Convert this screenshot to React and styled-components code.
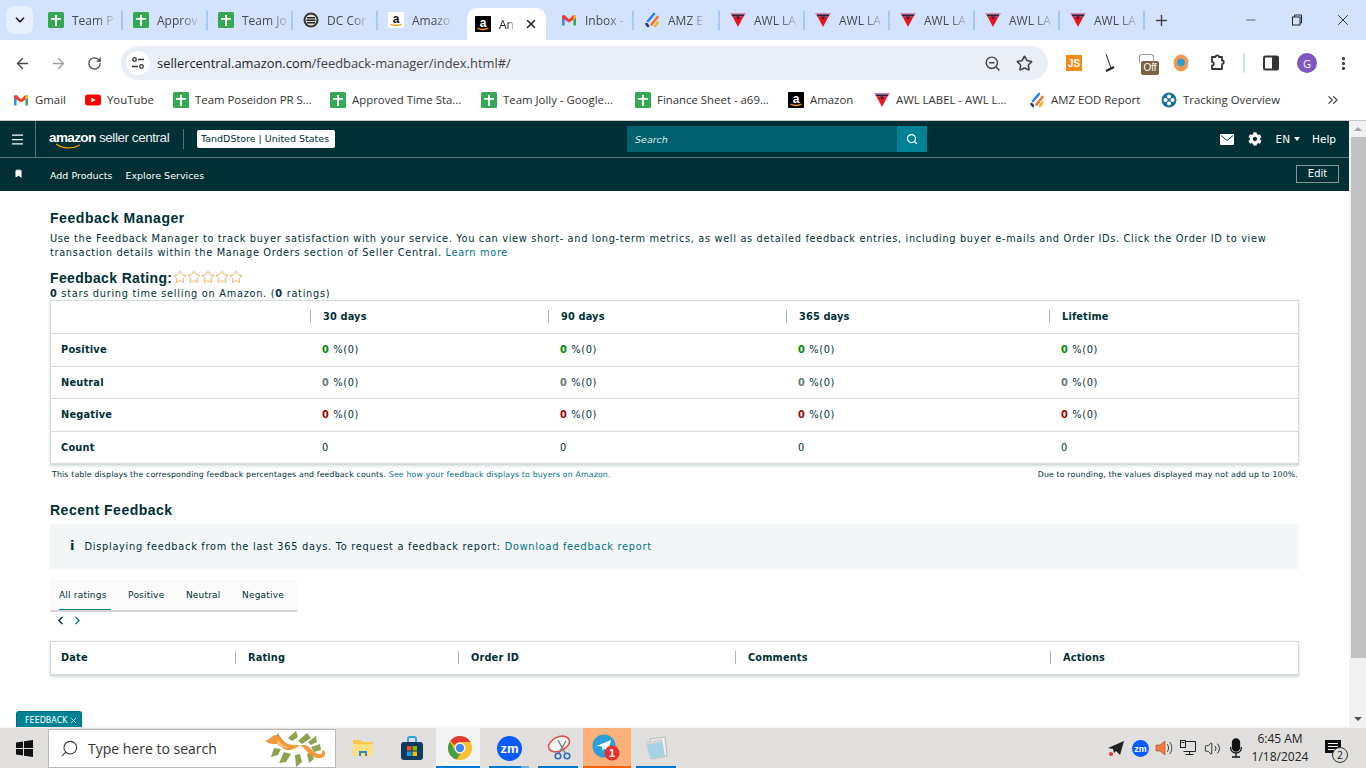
import React from 'react'
import styled, { createGlobalStyle } from 'styled-components'
import {
  ArrowLeft,
  ArrowRight,
  RotateCw,
  ZoomOut,
  Star,
  EllipsisVertical,
  ChevronDown,
  ChevronLeft,
  ChevronRight,
  ChevronsRight,
  Plus,
  Minus,
  X,
  Search,
  Menu,
  Bookmark,
  Volume2,
} from 'lucide-react'
import { FaCog } from 'react-icons/fa'

const colors = {
  ink: '#002f36',
  teal: '#008296',
  link: '#007185',
  line: '#d5dbdb',
  chrome: '#d3e3fd',
  omni: '#e9eef7',
}

const GlobalStyle = createGlobalStyle`
  html, body { margin: 0; padding: 0; height: 100%; overflow: hidden; background: #fff; }
  body { font-family: "DejaVu Sans", sans-serif; }
  * { box-sizing: border-box; }
`

/* ---------------------------- favicons ---------------------------- */

const SheetIcon = () => (
  <svg width="16" height="16" viewBox="0 0 16 16">
    <rect width="16" height="16" rx="1.5" fill="#34a853" />
    <path d="M7 3h2v3h4v1.800H9V14H7V7.800H3V6h4z" fill="#fff" />
  </svg>
)

const AmazonIcon = ({ dark }) => (
  <svg width="16" height="16" viewBox="0 0 16 16">
    <rect width="16" height="16" rx="1" fill={dark ? '#000' : '#fff'} />
    <text x="8" y="10.5" textAnchor="middle" fontSize="12" fontWeight="700" fontFamily="Liberation Sans" fill={dark ? '#fff' : '#111'}>a</text>
    <path d="M2.5 12c3 2 8 2 11 0" stroke="#f90" strokeWidth="1.3" fill="none" />
  </svg>
)

const DcIcon = () => (
  <svg width="16" height="16" viewBox="0 0 16 16">
    <circle cx="8" cy="8" r="7.5" fill="#333" />
    <circle cx="8" cy="8" r="5.5" fill="#ddd" />
    <path d="M4 5h8v1.5H4zM3.5 7.5h9V9h-9zM4 10h8v1.5H4z" fill="#222" />
  </svg>
)

const GmailIcon = () => (
  <svg width="16" height="16" viewBox="0 0 16 16">
    <path d="M1 3.5v10h2.6V7z" fill="#4285f4" />
    <path d="M15 3.5v10h-2.6V7z" fill="#34a853" />
    <path d="M1 3.5 L3.6 3 L8 7.2 L12.4 3 L15 3.5 V6 L8 10.6 L1 6z" fill="#ea4335" />
    <path d="M12.4 3 L15 3.5 V6 L12.4 7.8z" fill="#fbbc04" />
  </svg>
)

const YoutubeIcon = () => (
  <svg width="16" height="16" viewBox="0 0 16 16">
    <rect y="2.5" width="16" height="11" rx="3" fill="#f00" />
    <path d="M6.4 5.6v4.8L10.6 8z" fill="#fff" />
  </svg>
)

const EodIcon = () => (
  <svg width="16" height="16" viewBox="0 0 16 16" strokeWidth="2.6" strokeLinecap="round">
    <path d="M10 2 L4 9" stroke="#2f80ed" />
    <path d="M13.5 5 L7.5 12.5" stroke="#f2762e" />
    <path d="M13.5 10.5 L11 14" stroke="#f6b21b" />
    <path d="M2.5 12 L4 14" stroke="#1c3d7a" />
  </svg>
)

const AwlIcon = () => (
  <svg width="16" height="16" viewBox="0 0 16 16">
    <path d="M0 1h16l-1.500 3H1.500z" fill="#d88aa8" />
    <path d="M2 2.500h12V4.500H2z" fill="#26223f" />
    <path d="M2.500 4.500h11L8 15z" fill="#f0141e" />
    <path d="M6 4.500h4L8 8z" fill="#26223f" />
  </svg>
)

const TrackingIcon = () => (
  <svg width="16" height="16" viewBox="0 0 16 16">
    <circle cx="8" cy="8" r="7.500" fill="#1f6f9c" />
    <circle cx="8" cy="4.500" r="2" fill="#fff" />
    <circle cx="8" cy="11.500" r="2" fill="#fff" />
    <circle cx="4.500" cy="8" r="2" fill="#fff" />
    <circle cx="11.500" cy="8" r="2" fill="#fff" />
  </svg>
)

/* ---------------------------- tab strip --------------------------- */

const Strip = styled.div`
  height: 40px;
  background: ${colors.chrome};
  display: flex;
  align-items: center;
  padding-left: 6px;
  flex: none;
`

const TabMenu = styled.div`
  width: 27px;
  height: 28px;
  border-radius: 8px;
  background: #e8effc;
  display: flex;
  align-items: center;
  justify-content: center;
  margin-right: 5px;
  color: #1f1f1f;
`

const Tab = styled.div`
  height: 40px;
  width: ${({ $w }) => $w}px;
  display: flex;
  align-items: center;
  gap: 8px;
  padding-left: 10px;
  position: relative;
  color: #45494e;
  font: 12px "Open Sans", sans-serif;
  &::after {
    content: '';
    display: ${({ $noSep }) => ($noSep ? 'none' : 'block')};
    position: absolute;
    right: 0;
    top: 11px;
    height: 19px;
    width: 2px;
    background: #a8c7fa;
  }
`

const ActiveTab = styled(Tab)`
  width: 79px;
  margin: 8px 0 0 4px;
  height: 32px;
  padding-left: 8px;
  background: #fff;
  border-radius: 10px 10px 0 0;
  color: #1f1f1f;
  &::after { display: none; }
  & + div { margin-left: 4px; padding-left: 11px; }
`

const TabTitle = styled.span`
  white-space: nowrap;
  -webkit-mask-image: linear-gradient(90deg, #000 60%, rgba(0, 0, 0, 0.2));
  mask-image: linear-gradient(90deg, #000 60%, rgba(0, 0, 0, 0.2));
`

const TabClose = styled.span`
  display: flex;
  margin-left: 2px;
`

const NewTab = styled.div`
  margin-left: 8px;
  color: #444;
  display: flex;
`

const WindowButtons = styled.div`
  margin-left: auto;
  display: flex;
  color: #222;
`

const WindowButton = styled.div`
  width: 46px;
  height: 32px;
  display: flex;
  align-items: center;
  justify-content: center;
`

const RestoreIcon = () => (
  <svg width="12" height="12" viewBox="0 0 12 12" fill="none" stroke="#222">
    <rect x="1.500" y="3" width="7.500" height="8" />
    <path d="M3.500 3V1h7v8H9" />
  </svg>
)

/* ---------------------------- toolbar ----------------------------- */

const Toolbar = styled.div`
  height: 40px;
  padding-top: 6px;
  background: #fff;
  border-radius: 10px 10px 0 0;
  display: flex;
  align-items: center;
  flex: none;
`

const NavIcon = styled.div`
  width: 36px;
  display: flex;
  justify-content: center;
  color: ${({ $off }) => ($off ? '#9aa0a6' : '#474747')};
`

const BackIcon = styled(NavIcon)`
  margin-left: 4px;
`

const Omnibox = styled.div`
  width: 927px;
  height: 34px;
  margin-left: 9px;
  border-radius: 17px;
  background: ${colors.omni};
  display: flex;
  align-items: center;
  padding: 0 15px 0 5px;
  font: 12.900px "Open Sans", sans-serif;
  color: #1f1f1f;
`

const SiteChip = styled.div`
  width: 24px;
  height: 24px;
  border-radius: 50%;
  background: #fff;
  display: flex;
  align-items: center;
  justify-content: center;
  margin-right: 7px;
`

const Url = styled.span`
  flex: 1;
  span { color: #444; }
`

const OmniIcons = styled.div`
  display: flex;
  gap: 15px;
  color: #444;
`

const Extensions = styled.div`
  display: flex;
  align-items: center;
  flex: 1;
  padding-left: 17px;
`

const ExtSlot = styled.div`
  width: ${({ $w }) => $w}px;
  display: flex;
  justify-content: center;
  position: relative;
  color: #333;
`

const JsBadge = styled.div`
  width: 16px;
  height: 16px;
  background: #f48b17;
  color: #fff;
  font: 700 10px "Liberation Sans", sans-serif;
  display: flex;
  align-items: center;
  justify-content: center;
`

const OffBadge = styled.div`
  width: 18px;
  height: 14px;
  margin-top: 10px;
  background: #7a6245;
  border-radius: 2px;
  color: #fff;
  font: 10px "Liberation Sans", sans-serif;
  text-align: center;
  line-height: 14px;
  position: relative;
  &::before {
    content: '';
    position: absolute;
    left: -2px;
    top: -7px;
    width: 13px;
    height: 8px;
    border: 1px solid #9a9a9a;
    border-bottom: 0;
    border-radius: 3px 3px 0 0;
  }
`

const ToolbarRule = styled.div`
  width: 2px;
  height: 20px;
  background: #d3e3fd;
  margin: 0 17px 0 8px;
`

const Avatar = styled.div`
  width: 20px;
  height: 20px;
  border-radius: 50%;
  background: #7e57c2;
  color: #fff;
  font: 11px "Open Sans", sans-serif;
  display: flex;
  align-items: center;
  justify-content: center;
`

/* --------------------------- bookmarks ---------------------------- */

const BookmarkBar = styled.div`
  height: 41px;
  padding: 0 0 1px 13px;
  background: #fff;
  border-bottom: 1px solid #c8c8c8;
  display: flex;
  align-items: center;
  flex: none;
  position: relative;
`

const BookmarkItem = styled.div`
  width: ${({ $w }) => $w}px;
  display: flex;
  align-items: center;
  gap: 6px;
  font: 11.400px "Open Sans", sans-serif;
  color: #333;
  white-space: nowrap;
  flex: none;
`

const BookmarkMore = styled.div`
  position: absolute;
  right: 25px;
  top: 12px;
  color: #555;
`

/* ------------------------- seller central ------------------------- */

const PageRow = styled.div`
  flex: 1;
  min-height: 0;
  display: flex;
  position: relative;
`

const Page = styled.div`
  flex: 1;
  min-width: 0;
  color: ${colors.ink};
  font-size: 10px;
`

const TopNav = styled.div`
  height: 37px;
  background: ${colors.ink};
  border-bottom: 1px solid #5b7378;
  display: flex;
  align-items: center;
  position: relative;
  color: #fff;
`

const Burger = styled.div`
  width: 36px;
  height: 36px;
  border-right: 1px solid #5b7378;
  display: flex;
  align-items: center;
  justify-content: center;
`

const Logo = styled.div`
  margin-left: 13px;
  width: 134px;
  font: 13.500px "Liberation Sans", sans-serif;
  letter-spacing: -0.45px;
  white-space: nowrap;
  position: relative;
  margin-top: -4px;
  color: #e8eded;
  b { font-weight: 700; color: #fff; letter-spacing: -0.6px; }
  svg { position: absolute; left: 6px; top: 13px; }
`

const LogoRule = styled.div`
  width: 1px;
  height: 20px;
  background: #5b7378;
  margin-right: 13px;
`

const StoreChip = styled.div`
  background: #fff;
  color: ${colors.ink};
  border-radius: 2px;
  height: 18px;
  width: 138px;
  padding-left: 4px;
  font: 9.500px/18px "DejaVu Sans", sans-serif;
`

const SearchBar = styled.div`
  position: absolute;
  left: 627px;
  top: 5px;
  width: 300px;
  height: 26px;
  background: #00606e;
  display: flex;
  align-items: center;
  justify-content: space-between;
  padding-left: 8px;
  font: italic 9.500px "DejaVu Sans", sans-serif;
  color: #dfe8ea;
`

const SearchButton = styled.div`
  width: 30px;
  height: 26px;
  background: ${colors.teal};
  display: flex;
  align-items: center;
  justify-content: center;
  color: #fff;
`

const NavRight = styled.div`
  margin-left: auto;
  display: flex;
  align-items: center;
  padding-right: 13px;
  font: 10.500px "DejaVu Sans", sans-serif;
`

const MailIcon = styled.svg`
  margin-right: 14px;
`

const GearSlot = styled.span`
  display: flex;
  margin-right: 14px;
`

const Caret = styled.span`
  display: inline-block;
  border: 3px solid transparent;
  border-top: 4px solid #fff;
  border-bottom: 0;
  margin-left: 4px;
  vertical-align: middle;
`

const HelpLink = styled.span`
  margin-left: 12px;
`

const SubNav = styled.div`
  height: 33px;
  background: ${colors.ink};
  display: flex;
  align-items: center;
  color: #fff;
  padding-right: 10px;
`

const SubNavPin = styled.div`
  width: 50px;
  padding-left: 14px;
  display: flex;
  margin-top: -3px;
`

const SubNavLink = styled.span`
  font-size: 9.500px;
  margin: 1px 13px 0 0;
`

const EditButton = styled.div`
  margin-left: auto;
  width: 43px;
  height: 18px;
  border: 1px solid #879596;
  text-align: center;
  font: 10px/16px "DejaVu Sans", sans-serif;
  margin-top: -2px;
`

const Content = styled.div`
  padding: 19px 50px 0;
`

const Heading = styled.h1`
  margin: 0;
  font: 700 14px/16px "Liberation Sans", sans-serif;
  letter-spacing: 0.55px;
`

const Intro = styled.p`
  margin: 6px 0 0;
  font-size: 9.800px;
  letter-spacing: 0.66px;
  line-height: 14px;
`

const Link = styled.span`
  color: ${colors.link};
`

const RatingTitle = styled(Heading)`
  margin-top: 10px;
  letter-spacing: 0.35px;
  display: flex;
  align-items: center;
  gap: 1px;
`

const Stars = styled.span`
  display: flex;
  margin-top: -3px;
  color: #dfa94e;
`

const Summary = styled.p`
  margin: 1px 0 0;
  font-size: 9.800px;
  letter-spacing: 0.71px;
  line-height: 14px;
  b { font-weight: 700; }
`

const Table = styled.div`
  margin-top: ${({ $top }) => $top}px;
  border: 1px solid ${colors.line};
  border-bottom-width: 2px;
  box-shadow: 0 1px 3px rgba(0, 47, 54, 0.18);
  background: #fff;
`

const Row = styled.div`
  display: grid;
  grid-template-columns: ${({ $cols }) => $cols};
  height: ${({ $h }) => $h}px;
  align-items: center;
  border-top: ${({ $first }) => ($first ? '0' : `1px solid ${colors.line}`)};
`

const HeadCell = styled.div`
  font-weight: 700;
  font-size: 9.800px;
  letter-spacing: 0.15px;
  line-height: 13px;
  margin-top: -2px;
  padding-left: ${({ $rule }) => ($rule ? '12px' : '10px')};
  border-left: ${({ $rule }) => ($rule ? '1px solid #a9b4b6' : '0')};
  min-height: 13px;
`

const BodyCell = styled.div`
  font-size: 9.800px;
  letter-spacing: ${({ $label }) => ($label ? '0.2px' : '0.65px')};
  padding-left: ${({ $label }) => ($label ? '10px' : '12px')};
  font-weight: ${({ $label }) => ($label ? 700 : 400)};
`

const Pct = styled.b`
  color: ${({ $c }) => $c};
`

const TableNotes = styled.div`
  display: flex;
  justify-content: space-between;
  padding: 0 1px 0 2px;
  margin-top: 4px;
  font-size: 7.800px;
  letter-spacing: 0.16px;
  line-height: 11px;
`

const SectionTitle = styled(Heading)`
  margin-top: 22px;
  letter-spacing: 0.5px;
`

const InfoBox = styled.div`
  margin-top: 6px;
  height: 45px;
  background: #f3f6f6;
  display: flex;
  align-items: center;
  padding-left: 20px;
  font-size: 9.800px;
  letter-spacing: 0.72px;
  gap: 10px;
`

const InfoMark = styled.b`
  font-size: 13px;
  line-height: 13px;
  letter-spacing: 0;
  font-weight: 700;
  margin-top: -2px;
`

const RatingTabs = styled.div`
  margin-top: 10px;
  width: 247px;
  height: 33px;
  background: #fafafa;
  border-bottom: 2px solid #d5d5d5;
  display: flex;
  padding-left: 9px;
  gap: 21.500px;
  font-size: 9px;
  letter-spacing: 0.2px;
`

const RatingTab = styled.div`
  height: 31px;
  padding: 11px ${({ $active }) => ($active ? '4px' : '0')} 0 0;
  margin-right: ${({ $active }) => ($active ? '-4px' : '0')};
  border-bottom: ${({ $active }) => ($active ? `1px solid ${colors.teal}` : '0')};
`

const Pager = styled.div`
  display: flex;
  gap: 4px;
  height: 15px;
  margin: 1px 0 0 4px;
  align-items: center;
`

const FeedbackTab = styled.div`
  position: absolute;
  left: 16px;
  bottom: 0;
  width: 66px;
  height: 16px;
  background: ${colors.teal};
  border: 1px solid #006d7e;
  border-bottom: 0;
  border-radius: 3px 3px 0 0;
  color: #fff;
  font: 8px/14px "DejaVu Sans", sans-serif;
  padding: 2px 0 0 8px;
  display: flex;
  align-items: center;
  gap: 1px;
`

const Scrollbar = styled.div`
  width: 17px;
  flex: none;
  background: #f1f1f1;
  display: flex;
  flex-direction: column;
  align-items: center;
`

const ScrollArrow = styled.div`
  height: 16px;
  display: flex;
  align-items: center;
  justify-content: center;
  flex: none;
  &::before {
    content: '';
    border-left: 4px solid transparent;
    border-right: 4px solid transparent;
    ${({ $down }) => ($down ? 'border-top: 4px solid #505050;' : 'border-bottom: 4px solid #a3a3a3;')}
  }
`

const ScrollThumb = styled.div`
  width: 15px;
  margin-left: 2px;
  height: 521px;
  background: #c1c1c1;
  flex: none;
`

const ScrollGap = styled.div`
  flex: 1;
`

/* ---------------------------- taskbar ----------------------------- */

const Taskbar = styled.div`
  height: 41px;
  flex: none;
  background: #e0dfdd;
  border-top: 1px solid #f2f2f2;
  display: flex;
  align-items: stretch;
  font-family: "Open Sans", sans-serif;
  color: #222;
`

const StartButton = styled.div`
  width: 48px;
  display: flex;
  align-items: center;
  justify-content: center;
`

const SearchBox = styled.div`
  width: 288px;
  margin: 1px 0 0;
  background: #fff;
  border: 1px solid #b9b9b9;
  display: flex;
  align-items: center;
  padding-left: 11px;
  gap: 9px;
  font-size: 14px;
  overflow: hidden;
  color: #333;
  svg:first-child { transform: scaleX(-1); }
  svg:last-child { margin-left: auto; margin-right: 5px; }
`

const TaskIcons = styled.div`
  display: flex;
  margin-left: 3px;
`

const TaskIcon = styled.div`
  width: ${({ $w }) => $w || 49}px;
  display: flex;
  align-items: center;
  justify-content: center;
  background: ${({ $bg }) => $bg || 'transparent'};
  padding-left: ${({ $pad }) => $pad || 0}px;
  position: relative;
  margin-right: ${({ $gap }) => $gap || 0}px;
  &::after {
    content: '';
    display: ${({ $mark }) => ($mark ? 'block' : 'none')};
    position: absolute;
    left: 0;
    right: 0;
    bottom: 0;
    height: 2px;
    background: ${({ $mark }) => $mark};
  }
`

const Tray = styled.div`
  margin-left: auto;
  display: flex;
  align-items: center;
  padding-right: 21px;
`

const TrayIcon = styled.div`
  width: 24px;
  display: flex;
  justify-content: center;
  color: #222;
`

const Clock = styled.div`
  width: 64px;
  margin-right: 9px;
  text-align: center;
  font-size: 12px;
  line-height: 18px;
  color: #222;
`

const Notify = styled.div`
  position: relative;
  width: 24px;
  display: flex;
  justify-content: center;
`

const NotifyCount = styled.div`
  position: absolute;
  right: -3px;
  bottom: -6px;
  width: 16px;
  height: 16px;
  border-radius: 50%;
  border: 1px solid #333;
  background: #dededc;
  font-size: 10.500px;
  line-height: 14px;
  text-align: center;
`

const Shell = styled.div`
  width: 1366px;
  height: 768px;
  display: flex;
  flex-direction: column;
  overflow: hidden;
`

const PuzzleIcon = () => (
  <svg width="18" height="18" viewBox="0 0 18 18" fill="none" stroke="#333" strokeWidth="1.800" strokeLinejoin="round">
    <path d="M4 3h3.500a1.700 1.700 0 0 1 3.400 0H14v3.500a1.800 1.800 0 0 1 0 3.600V15H4v-3.500a1.800 1.800 0 0 0 0-3.600z" />
  </svg>
)

const WindowsLogo = () => (
  <svg width="17" height="17" viewBox="0 0 17 17" fill="#111">
    <path d="M0 2.400 7 1.400V8H0zM8 1.200 17 0v8H8zM0 9h7v6.600L0 14.600zM8 9h9v8l-9-1.200z" />
  </svg>
)

const FolderIcon = () => (
  <svg width="22" height="20" viewBox="0 0 22 20">
    <path d="M1 2h8l2 2h10v14H1z" fill="#f5c94c" />
    <path d="M1 6h20v12H1z" fill="#fde181" />
    <path d="M7 13h8v5h-2v-3H9v3H7z" fill="#2d8ad6" />
  </svg>
)

const StoreIcon = () => (
  <svg width="22" height="24" viewBox="0 0 22 24">
    <path d="M7 6V3a2 2 0 0 1 2-2h4a2 2 0 0 1 2 2v3" fill="none" stroke="#29a6e0" strokeWidth="2" />
    <rect y="6" width="22" height="18" rx="3" fill="#12395f" />
    <rect x="6" y="10" width="4.500" height="4.500" fill="#f25022" />
    <rect x="11.500" y="10" width="4.500" height="4.500" fill="#7fba00" />
    <rect x="6" y="15.500" width="4.500" height="4.500" fill="#00a4ef" />
    <rect x="11.500" y="15.500" width="4.500" height="4.500" fill="#ffb900" />
  </svg>
)

const ChromeIcon = () => (
  <svg width="24" height="24" viewBox="0 0 24 24">
    <circle cx="12" cy="12" r="12" fill="#fbc02d" />
    <path d="M12 0a12 12 0 0 1 10.400 6H12a6 6 0 0 0-5.500 3.600L2.300 4.900A12 12 0 0 1 12 0z" fill="#e53935" />
    <path d="M1.900 5.500 7 14.500a6 6 0 0 0 5.500 3.500L8.500 23.500A12 12 0 0 1 1.900 5.500z" fill="#43a047" />
    <circle cx="12" cy="12" r="5.400" fill="#fff" />
    <circle cx="12" cy="12" r="4.200" fill="#4285f4" />
  </svg>
)

const ZoomBadge = ({ size }) => (
  <svg width={size} height={size} viewBox="0 0 24 24">
    <circle cx="12" cy="12" r="12" fill="#0b5cff" />
    <text x="12" y="16.500" textAnchor="middle" fontSize="12.500" fontWeight="700" fontFamily="Liberation Sans" fill="#fff">zm</text>
  </svg>
)

const SnipIcon = () => (
  <svg width="26" height="26" viewBox="0 0 26 26" fill="none">
    <ellipse cx="12" cy="9" rx="11" ry="7" transform="rotate(-25 12 9)" fill="#f4f4f4" stroke="#d9534f" strokeWidth="1.500" />
    <path d="M11 5l7 13M19 6l-7 12" stroke="#777" strokeWidth="1.300" />
    <circle cx="20" cy="21" r="2.800" stroke="#2e6fc4" strokeWidth="1.600" />
    <circle cx="11" cy="21" r="2.800" stroke="#2e6fc4" strokeWidth="1.600" />
  </svg>
)

const TelegramIcon = () => (
  <svg width="30" height="28" viewBox="0 0 30 28">
    <circle cx="12" cy="12" r="11.500" fill="#2b9fd8" />
    <path d="M4.500 12 19 6l-3 12-3.500-3.500-2 2-.5-4z" fill="#fff" />
    <circle cx="20" cy="19" r="7.500" fill="#e8312a" />
    <text x="20" y="23" textAnchor="middle" fontSize="11" fontWeight="700" fontFamily="Liberation Sans" fill="#fff">1</text>
  </svg>
)

const NotepadIcon = () => (
  <svg width="24" height="24" viewBox="0 0 24 24">
    <path d="M6 3 21 1l2 19-15 3z" fill="#f1f1f1" stroke="#9a9a9a" strokeWidth=".6" />
    <path d="M2 6 18 3l3 17-15 3z" fill="#a7d3e3" />
    <path d="M2 6 18 3l.5 3L2.500 9z" fill="#d5d5d5" />
  </svg>
)

const DragonIcon = () => (
  <svg width="66" height="38" viewBox="0 0 66 38">
    <path d="M14 3 10 9l6-2zM24 8l8-7 2 6-6 4zM34 11l9-8 4 5-9 6zM44 12l8-6 1 6-6 3zM10 18l-3 9 7-2 3-6zM20 22l-5 11 7-1 5-8zM31 25l1 12 6-5-2-8zM43 24l2 9 5-4-3-7zM47 17l9-3 1 6-7 2z" fill="#8ea352" />
    <path d="M1 11c4-1 7-6 11-6 5 0 6 5 10 8 6 3 11 1 15 3 5 3 8 9 13 11 4 2 9 2 11-2 1-3-1-5-3-5 1 3-1 5-4 4-5-1-8-9-14-9-6 0-10 6-17 5-5-1-7-5-10-6-4 0-8 0-12-3z" fill="#ef9a3c" />
    <path d="M14 10c3 3 6 7 12 7-3 2-10 1-13-3z" fill="#f6c06e" />
  </svg>
)

const TrayTelegram = () => (
  <svg width="18" height="18" viewBox="0 0 18 18">
    <path d="M1 9 17 2l-4 14-4-4-2 2-1-4z" fill="#222" />
    <circle cx="4" cy="15" r="2" fill="#e8312a" />
  </svg>
)

const TraySpeaker = () => (
  <svg width="18" height="18" viewBox="0 0 18 18">
    <path d="M1 6h4l5-4v14l-5-4H1z" fill="#ef7b3c" stroke="#a8481c" strokeWidth=".6" />
    <path d="M12 5c2 2 2 6 0 8M14.500 3c3 3 3 9 0 12" stroke="#444" fill="none" />
  </svg>
)

const TrayNetwork = () => (
  <svg width="18" height="18" viewBox="0 0 18 18" fill="none" stroke="#222">
    <path d="M4.500 2.500h12v10h-12M10.500 12.500v3M6.500 15.500h8" />
    <rect x="1.500" y="1.500" width="5" height="7" fill="#e0dfdd" />
    <path d="M2.500 3.500h3" />
  </svg>
)

const TrayMic = () => (
  <svg width="16" height="20" viewBox="0 0 16 20" fill="none" stroke="#111" strokeWidth="1.300">
    <rect x="4.500" y="1" width="7" height="12" rx="3.500" fill="#111" />
    <path d="M2.500 9c0 8 11 8 11 0M8 15v3.500M4 19h8" />
  </svg>
)

const TrayNotify = () => (
  <svg width="18" height="18" viewBox="0 0 18 18">
    <path d="M1 1h16v13h-6l-3 3v-3H1z" fill="#111" />
    <path d="M4 4.500h10M4 7.500h10M4 10.500h7" stroke="#fff" />
  </svg>
)

const tabsLeft = [
  ['Team P', <SheetIcon />],
  ['Approv', <SheetIcon />],
  ['Team Jo', <SheetIcon />],
  ['DC Cor', <DcIcon />],
  ['Amazo', <AmazonIcon />],
]

const tabsRight = [
  [84, 'Inbox -', <GmailIcon />],
  [86, 'AMZ E', <EodIcon />],
  [85, 'AWL LA', <AwlIcon />],
  [85, 'AWL LA', <AwlIcon />],
  [85, 'AWL LA', <AwlIcon />],
  [85, 'AWL LA', <AwlIcon />],
  [85, 'AWL LA', <AwlIcon />],
]

const bookmarks = [
  [72, 'Gmail', <GmailIcon />],
  [88, 'YouTube', <YoutubeIcon />],
  [157, 'Team Poseidon PR S...', <SheetIcon />],
  [151, 'Approved Time Sta...', <SheetIcon />],
  [154, 'Team Jolly - Google...', <SheetIcon />],
  [153, 'Finance Sheet - a69...', <SheetIcon />],
  [86, 'Amazon', <AmazonIcon dark />],
  [155, 'AWL LABEL - AWL L...', <AwlIcon />],
  [132, 'AMZ EOD Report', <EodIcon />],
  [130, 'Tracking Overview', <TrackingIcon />],
]

const statCols = '259px 238px 238px 263px 1fr'
const feedCols = '184px 223px 277px 315px 1fr'

const statRows = [
  ['Positive', '#008a00'],
  ['Neutral', '#6c7778'],
  ['Negative', '#a00000'],
]

const StarRow = () => (
  <Stars>
    {[0, 1, 2, 3, 4].map(i => (
      <Star key={i} size={14} strokeWidth={1.500} />
    ))}
  </Stars>
)

export default function App() {
  return (
    <Shell>
      <GlobalStyle />
      <Strip>
        <TabMenu>
          <ChevronDown size={14} strokeWidth={3} />
        </TabMenu>
        {tabsLeft.map(([title, icon], i) => (
          <Tab key={i} $w={85} $noSep={i === 4}>
            {icon}
            <TabTitle>{title}</TabTitle>
          </Tab>
        ))}
        <ActiveTab>
          <AmazonIcon dark />
          <TabTitle>An</TabTitle>
          <TabClose><X size={14} strokeWidth={2.500} /></TabClose>
        </ActiveTab>
        {tabsRight.map(([w, title, icon], i) => (
          <Tab key={i} $w={w}>
            {icon}
            <TabTitle>{title}</TabTitle>
          </Tab>
        ))}
        <NewTab>
          <Plus size={17} strokeWidth={2} />
        </NewTab>
        <WindowButtons>
          <WindowButton><Minus size={14} strokeWidth={1.200} /></WindowButton>
          <WindowButton><RestoreIcon /></WindowButton>
          <WindowButton><X size={18} strokeWidth={1.200} /></WindowButton>
        </WindowButtons>
      </Strip>

      <Toolbar>
        <BackIcon><ArrowLeft size={17} /></BackIcon>
        <NavIcon $off><ArrowRight size={17} /></NavIcon>
        <NavIcon><RotateCw size={15} /></NavIcon>
        <Omnibox>
          <SiteChip>
            <svg width="14" height="14" viewBox="0 0 14 14" fill="none" stroke="#333" strokeWidth="1.300">
              <circle cx="3.500" cy="3.500" r="1.800" />
              <path d="M7 3.500h6M1 10.500h6" />
              <circle cx="10.500" cy="10.500" r="1.800" />
            </svg>
          </SiteChip>
          <Url>sellercentral.amazon.com<span>/feedback-manager/index.html#/</span></Url>
          <OmniIcons>
            <ZoomOut size={17} />
            <Star size={17} strokeWidth={2.300} />
          </OmniIcons>
        </Omnibox>
        <Extensions>
          <ExtSlot $w={18}><JsBadge>JS</JsBadge></ExtSlot>
          <ExtSlot $w={54}>
            <svg width="14" height="18" viewBox="0 0 14 18" stroke="#222" fill="none">
              <path d="M3 0 8 14" />
              <path d="M3 17l8-4" strokeWidth="2" />
            </svg>
          </ExtSlot>
          <ExtSlot $w={26}><OffBadge>Off</OffBadge></ExtSlot>
          <ExtSlot $w={36}>
            <svg width="16" height="18" viewBox="0 0 16 18">
              <ellipse cx="8" cy="9" rx="7.500" ry="8.500" fill="#f09a4f" />
              <circle cx="8" cy="8.500" r="3.800" fill="#2e9bd6" />
            </svg>
          </ExtSlot>
          <ExtSlot $w={36}><PuzzleIcon /></ExtSlot>
          <ToolbarRule />
          <ExtSlot $w={18}>
            <svg width="16" height="16" viewBox="0 0 16 16">
              <rect x="1" y="1.500" width="14" height="13" rx="1.500" fill="none" stroke="#333" strokeWidth="2" />
              <rect x="9" y="1.500" width="6" height="13" fill="#333" />
            </svg>
          </ExtSlot>
          <ExtSlot $w={54}><Avatar>G</Avatar></ExtSlot>
          <ExtSlot $w={18}><EllipsisVertical size={17} strokeWidth={2.500} /></ExtSlot>
        </Extensions>
      </Toolbar>

      <BookmarkBar>
        {bookmarks.map(([w, label, icon]) => (
          <BookmarkItem key={label} $w={w}>
            {icon}
            {label}
          </BookmarkItem>
        ))}
        <BookmarkMore><ChevronsRight size={16} /></BookmarkMore>
      </BookmarkBar>

      <PageRow>
        <Page>
          <TopNav>
            <Burger><Menu size={15} strokeWidth={2} /></Burger>
            <Logo>
              <b>amazon</b> seller central
              <svg width="30" height="7" viewBox="0 0 30 7" fill="none">
                <path d="M1 1c7 5 17 5 24 1" stroke="#f90" strokeWidth="1.300" />
              </svg>
            </Logo>
            <LogoRule />
            <StoreChip>TandDStore | United States</StoreChip>
            <SearchBar>
              Search
              <SearchButton><Search size={12} strokeWidth={2.500} /></SearchButton>
            </SearchBar>
            <NavRight>
              <MailIcon width="14" height="11" viewBox="0 0 14 11">
                <rect width="14" height="11" rx="1" fill="#fff" />
                <path d="M1 1.500 7 6.500l6-5" fill="none" stroke="#002f36" />
              </MailIcon>
              <GearSlot><FaCog size={14} /></GearSlot>
              EN<Caret />
              <HelpLink>Help</HelpLink>
            </NavRight>
          </TopNav>
          <SubNav>
            <SubNavPin><Bookmark size={9} fill="#fff" /></SubNavPin>
            <SubNavLink>Add Products</SubNavLink>
            <SubNavLink>Explore Services</SubNavLink>
            <EditButton>Edit</EditButton>
          </SubNav>

          <Content>
            <Heading>Feedback Manager</Heading>
            <Intro>
              Use the Feedback Manager to track buyer satisfaction with your service. You can view short- and long-term metrics, as well as detailed feedback entries, including buyer e-mails and Order IDs. Click the Order ID to view transaction details within the Manage Orders section of Seller Central. <Link>Learn more</Link>
            </Intro>
            <RatingTitle>Feedback Rating:<StarRow /></RatingTitle>
            <Summary><b>0</b> stars during time selling on Amazon. (<b>0</b> ratings)</Summary>

            <Table $top={-1}>
              <Row $cols={statCols} $h={32} $first>
                <HeadCell />
                <HeadCell $rule>30 days</HeadCell>
                <HeadCell $rule>90 days</HeadCell>
                <HeadCell $rule>365 days</HeadCell>
                <HeadCell $rule>Lifetime</HeadCell>
              </Row>
              {statRows.map(([label, color]) => (
                <Row key={label} $cols={statCols} $h={32.500}>
                  <BodyCell $label>{label}</BodyCell>
                  {[0, 1, 2, 3].map(i => (
                    <BodyCell key={i}><Pct $c={color}>0</Pct> %(0)</BodyCell>
                  ))}
                </Row>
              ))}
              <Row $cols={statCols} $h={32.500}>
                <BodyCell $label>Count</BodyCell>
                {[0, 1, 2, 3].map(i => (
                  <BodyCell key={i}>0</BodyCell>
                ))}
              </Row>
            </Table>
            <TableNotes>
              <span>This table displays the corresponding feedback percentages and feedback counts. <Link>See how your feedback displays to buyers on Amazon.</Link></span>
              <span>Due to rounding, the values displayed may not add up to 100%.</span>
            </TableNotes>

            <SectionTitle>Recent Feedback</SectionTitle>
            <InfoBox>
              <InfoMark>i</InfoMark>
              <span>Displaying feedback from the last 365 days. To request a feedback report: <Link>Download feedback report</Link></span>
            </InfoBox>
            <RatingTabs>
              <RatingTab $active>All ratings</RatingTab>
              <RatingTab>Positive</RatingTab>
              <RatingTab>Neutral</RatingTab>
              <RatingTab>Negative</RatingTab>
            </RatingTabs>
            <Pager>
              <ChevronLeft size={13} strokeWidth={2.500} />
              <ChevronRight size={13} strokeWidth={2.500} color={colors.teal} />
            </Pager>
            <Table $top={13}>
              <Row $cols={feedCols} $h={32} $first>
                <HeadCell>Date</HeadCell>
                <HeadCell $rule>Rating</HeadCell>
                <HeadCell $rule>Order ID</HeadCell>
                <HeadCell $rule>Comments</HeadCell>
                <HeadCell $rule>Actions</HeadCell>
              </Row>
            </Table>
          </Content>
        </Page>
        <Scrollbar>
          <ScrollArrow />
          <ScrollThumb />
          <ScrollGap />
          <ScrollArrow $down />
        </Scrollbar>
        <FeedbackTab>FEEDBACK <X size={9} /></FeedbackTab>
      </PageRow>

      <Taskbar>
        <StartButton><WindowsLogo /></StartButton>
        <SearchBox>
          <Search size={19} strokeWidth={1.300} />
          Type here to search
          <DragonIcon />
        </SearchBox>
        <TaskIcons>
          <TaskIcon $w={48}><FolderIcon /></TaskIcon>
          <TaskIcon><StoreIcon /></TaskIcon>
          <TaskIcon $bg="#f3f3f3" $w={44} $gap={9} $pad={4} $mark="#0078d4"><ChromeIcon /></TaskIcon>
          <TaskIcon $w={40} $gap={9} $mark="linear-gradient(90deg, #0078d4 80%, #6cb0e6 80%)"><ZoomBadge size={25} /></TaskIcon>
          <TaskIcon $w={40} $gap={5} $pad={4} $mark="#0078d4"><SnipIcon /></TaskIcon>
          <TaskIcon $bg="#fbb27a" $w={48} $gap={5} $mark="#f7630c"><TelegramIcon /></TaskIcon>
          <TaskIcon $w={40} $mark="#0078d4"><NotepadIcon /></TaskIcon>
        </TaskIcons>
        <Tray>
          <TrayIcon><TrayTelegram /></TrayIcon>
          <TrayIcon><ZoomBadge size={17} /></TrayIcon>
          <TrayIcon><TraySpeaker /></TrayIcon>
          <TrayIcon><TrayNetwork /></TrayIcon>
          <TrayIcon><Volume2 size={17} strokeWidth={1.300} /></TrayIcon>
          <TrayIcon><TrayMic /></TrayIcon>
          <Clock>6:45 AM<br />1/18/2024</Clock>
          <Notify>
            <TrayNotify />
            <NotifyCount>2</NotifyCount>
          </Notify>
        </Tray>
      </Taskbar>
    </Shell>
  )
}
